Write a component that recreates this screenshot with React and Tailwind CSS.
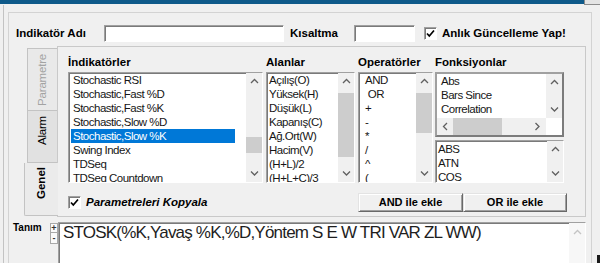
// Gösterge tanım penceresi — İndikatörler / Alanlar / Operatörler / Fonksiyonlar

const SUNKEN =
  'border border-t-[#a0a0a0] border-l-[#a0a0a0] border-r-[#ffffff] border-b-[#ffffff] shadow-[inset_1px_1px_0_#7a7a7a]'
const RAISED =
  'border border-t-[#e3e3e3] border-l-[#e3e3e3] border-r-[#696969] border-b-[#696969] shadow-[inset_1px_1px_0_#ffffff,inset_-1px_-1px_0_#a0a0a0]'

var INDICATORS = [
  'Stochastic RSI',
  'Stochastic,Fast %D',
  'Stochastic,Fast %K',
  'Stochastic,Slow %D',
  'Stochastic,Slow %K',
  'Swing Index',
  'TDSeq',
  'TDSeq Countdown',
]
var FIELDS = ['Açılış(O)', 'Yüksek(H)', 'Düşük(L)', 'Kapanış(C)', 'Ağ.Ort(W)', 'Hacim(V)', '(H+L)/2', '(H+L+C)/3']
var OPERATORS = ['AND', '\u00a0OR', '+', '-', '*', '/', '^', '(']
var FUNCTIONS = ['Abs', 'Bars Since', 'Correlation']
var FUNCTIONS_2 = ['ABS', 'ATN', 'COS']

function Chevron({ dir, color = '#606060' }) {
  var horiz = dir === 'left' || dir === 'right'
  var pts = {
    up: '1,5 4.5,1.5 8,5',
    down: '1,1.5 4.5,5 8,1.5',
    left: '5,1 1.5,4.5 5,8',
    right: '1.5,1 5,4.5 1.5,8',
  }[dir]
  return (
    <svg width={horiz ? 7 : 9} height={horiz ? 9 : 7} viewBox={horiz ? '0 0 7 9' : '0 0 9 7'}>
      <polyline points={pts} fill="none" stroke={color} strokeWidth="1.3" />
    </svg>
  )
}

function VScroll({ children }) {
  return (
    <div className="w-[16px] h-full shrink-0 flex flex-col bg-[#f0f0f0]">
      <div className="h-[17px] shrink-0 flex items-center justify-center">
        <Chevron dir="up" />
      </div>
      <div className="flex-1 min-h-0">{children}</div>
      <div className="h-[17px] shrink-0 flex items-center justify-center">
        <Chevron dir="down" />
      </div>
    </div>
  )
}

function Row({ children, selected }) {
  return (
    <div
      className={
        'h-[14px] leading-[15px] pl-[2px] whitespace-nowrap ' +
        (selected ? 'bg-[#0078d7] text-white' : 'text-[#161616]')
      }
    >
      {children}
    </div>
  )
}

function Check() {
  return (
    <div className={'w-[13px] h-[13px] shrink-0 bg-white flex items-center justify-center ' + SUNKEN}>
      <svg width="9" height="9" viewBox="0 0 9 9">
        <polyline points="1,4.5 3.3,7 8,1.5" fill="none" stroke="#000" strokeWidth="1.7" />
      </svg>
    </div>
  )
}

function Label({ children }) {
  return <div className="h-[14px] leading-[14px] text-[11.5px] font-bold whitespace-nowrap">{children}</div>
}

export default function App() {
  return (
    <div className="w-[600px] h-[263px] overflow-hidden bg-[#f0f0f0] text-black font-['Liberation_Sans',Arial,sans-serif] flex flex-col">
      {/* window title strip */}
      <div className="flex h-[5px] shrink-0">
        <div className="flex-1 h-[4px] bg-[#0f5a8a]" />
        <div className="w-[16px] h-[5px] bg-[#e4e4e4] border-l border-b border-[#8c8c8c]" />
      </div>

      <div className="flex flex-1 min-h-0">
        <div className="w-[3px] shrink-0" />
        <div className="w-px shrink-0 bg-[#c3c3c3]" />
        <div className="w-[4px] shrink-0" />

        {/* group box */}
        <div className="w-[584px] shrink-0 mt-[7px] border border-b-0 border-[#d3d3d3] flex flex-col">
          {/* top row */}
          <div className="flex items-center h-[17px] mt-[12px] pl-[7px] text-[11.5px] font-bold shrink-0">
            <span className="w-[88px] shrink-0">Indikatör Adı</span>
            <div className={'w-[180px] h-[17px] shrink-0 bg-white ' + SUNKEN} />
            <span className="ml-[6px] w-[64px] shrink-0">Kısaltma</span>
            <div className={'w-[61px] h-[17px] shrink-0 bg-white ' + SUNKEN} />
            <div className="ml-[9px]">
              <Check />
            </div>
            <span className="ml-[5px] whitespace-nowrap">Anlık Güncelleme Yap!</span>
          </div>

          {/* tabs + panel */}
          <div className="flex mt-[4px] pl-[15px] h-[171px] shrink-0">
            <div className="w-[33px] shrink-0 flex flex-col pt-[2px] relative z-10 text-[11.5px]">
              <div className="ml-[3px] h-[63px] border border-r-0 border-[#c3c3c3] bg-[#e9e9e9] flex items-center justify-center">
                <span className="[writing-mode:vertical-rl] rotate-180 text-[#a3a3a3] tracking-[-0.2px]">Parametre</span>
              </div>
              <div className="ml-[3px] h-[52px] border border-r-0 border-t-0 border-[#c3c3c3] bg-[#e1e1e1] flex items-center justify-center pb-[12px]">
                <span className="[writing-mode:vertical-rl] rotate-180 tracking-[-0.2px]">Alarm</span>
              </div>
              <div className="w-[34px] h-[53px] border border-r-0 border-t-0 border-[#c3c3c3] rounded-bl-[2px] bg-[#ebebeb] flex items-center justify-center pb-[12px]">
                <span className="[writing-mode:vertical-rl] rotate-180 font-bold">Genel</span>
              </div>
            </div>

            <div className="w-[529px] h-[171px] shrink-0 border border-[#c9c9c9] flex flex-col">
              <div className="flex pl-[10px] pt-[8px] text-[11.5px] tracking-[-0.5px]">
                {/* İndikatörler */}
                <div className="w-[195px] shrink-0 flex flex-col">
                  <div className="tracking-normal">
                    <Label>İndikatörler</Label>
                  </div>
                  <div className={'mt-[3px] h-[111px] bg-white flex overflow-hidden ' + SUNKEN}>
                    <div className="w-[177px] shrink-0 pl-[2px] pr-[11px] overflow-hidden">
                      {INDICATORS.map(function (it, i) {
                        return (
                          <Row key={it} selected={i === 4}>
                            {it}
                          </Row>
                        )
                      })}
                    </div>
                    <VScroll>
                      <div className="mt-[47px] h-[16px] bg-[#cdcdcd]" />
                    </VScroll>
                  </div>
                </div>

                {/* Alanlar */}
                <div className="w-[89px] ml-[3px] shrink-0 flex flex-col">
                  <div className="tracking-normal">
                    <Label>Alanlar</Label>
                  </div>
                  <div className={'mt-[3px] h-[111px] bg-white flex overflow-hidden ' + SUNKEN}>
                    <div className="flex-1 min-w-0 overflow-hidden">
                      {FIELDS.map(function (it) {
                        return <Row key={it}>{it}</Row>
                      })}
                    </div>
                    <VScroll>
                      <div className="mt-[3px] h-[64px] bg-[#cdcdcd]" />
                    </VScroll>
                  </div>
                </div>

                {/* Operatörler */}
                <div className="w-[75px] ml-[3px] shrink-0 flex flex-col">
                  <div className="tracking-normal">
                    <Label>Operatörler</Label>
                  </div>
                  <div className={'mt-[3px] h-[111px] bg-white flex overflow-hidden ' + SUNKEN}>
                    <div className="flex-1 min-w-0 pl-[4px] overflow-hidden">
                      {OPERATORS.map(function (it) {
                        return <Row key={it}>{it}</Row>
                      })}
                    </div>
                    <VScroll>
                      <div className="mt-[3px] h-[40px] bg-[#cdcdcd]" />
                    </VScroll>
                  </div>
                </div>

                {/* Fonksiyonlar */}
                <div className="w-[129px] ml-[2px] shrink-0 flex flex-col">
                  <div className="tracking-normal">
                    <Label>Fonksiyonlar</Label>
                  </div>
                  <div className="mt-[3px] h-[65px] bg-white border-2 border-t-[#a0a0a0] border-l-[#a0a0a0] border-r-[#7c7c7c] border-b-[#7c7c7c] flex flex-col overflow-hidden">
                    <div className="flex h-[44px] shrink-0">
                      <div className="flex-1 min-w-0 pl-[2px] overflow-hidden">
                        {FUNCTIONS.map(function (it) {
                          return <Row key={it}>{it}</Row>
                        })}
                      </div>
                      <VScroll />
                    </div>
                    <div className="flex h-[17px] shrink-0">
                      <div className="flex-1 flex bg-[#f0f0f0]">
                        <div className="w-[16px] flex items-center justify-center">
                          <Chevron dir="left" />
                        </div>
                        <div className="w-[49px] bg-[#cdcdcd]" />
                        <div className="flex-1" />
                        <div className="w-[17px] flex items-center justify-center">
                          <Chevron dir="right" />
                        </div>
                      </div>
                      <div className="w-[16px] bg-white" />
                    </div>
                  </div>
                  <div className={'mt-[3px] h-[43px] bg-white flex overflow-hidden ' + SUNKEN}>
                    <div className="flex-1 min-w-0 pt-[1px] overflow-hidden">
                      {FUNCTIONS_2.map(function (it) {
                        return <Row key={it}>{it}</Row>
                      })}
                    </div>
                    <VScroll />
                  </div>
                </div>
              </div>

              {/* copy parameters + add buttons */}
              <div className="flex items-center mt-[10px] pl-[10px]">
                <div className="w-[290px] shrink-0 flex items-center">
                  <Check />
                  <span className="ml-[5px] text-[11.5px] font-bold italic whitespace-nowrap">Parametreleri Kopyala</span>
                </div>
                <div className={'w-[105px] h-[19px] shrink-0 bg-[#f0f0f0] flex items-center justify-center text-[11px] font-bold ' + RAISED}>
                  AND ile ekle
                </div>
                <div className={'w-[104px] h-[19px] shrink-0 bg-[#f0f0f0] flex items-center justify-center text-[11px] font-bold ' + RAISED}>
                  OR ile ekle
                </div>
              </div>
            </div>
          </div>

          {/* Tanım */}
          <div className="flex mt-[5px] flex-1 min-h-0">
            <div className="w-[41px] shrink-0 pl-[4px] text-[10px] leading-[12px] font-bold">Tanım</div>
            <div className="w-[8px] shrink-0 flex flex-col pt-[1px]">
              <div className="h-[10px] bg-[#fafafa] border border-[#a8a8a8] flex items-center justify-center text-[9px] leading-none font-bold text-[#333]">
                +
              </div>
              <div className="h-[11px] bg-[#fafafa] border border-t-0 border-[#a8a8a8] flex items-center justify-center text-[9px] leading-none font-bold text-[#333]">
                -
              </div>
            </div>
            <div className={'w-[528px] h-[50px] shrink-0 bg-white flex ' + SUNKEN}>
              <div className="flex-1 min-w-0 pl-[4px] text-[17px] leading-[20px] tracking-[-0.8px] text-[#1e1e1e] whitespace-nowrap overflow-hidden">
                STOSK(%K,Yavaş %K,%D,Yöntem S E W TRI VAR ZL WW)
              </div>
              <div className="w-[16px] shrink-0 bg-[#f7f7f7]">
                <div className="h-[18px] flex items-center justify-center">
                  <Chevron dir="up" color="#c4c4c4" />
                </div>
              </div>
            </div>
          </div>
        </div>

        <div className="flex-1 flex flex-col justify-end">
          <div className="ml-auto w-[3px] h-[8px] bg-[#1a1a1a]" />
        </div>
      </div>
    </div>
  )
}
